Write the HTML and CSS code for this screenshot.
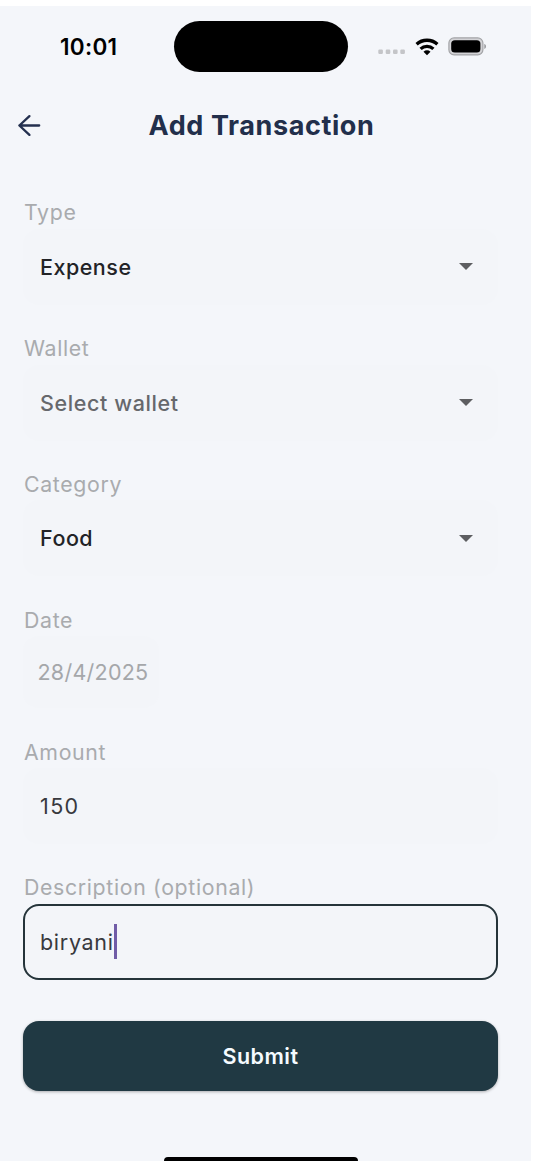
FILE: index.html
```html
<!DOCTYPE html>
<html lang="en">
<head>
<meta charset="utf-8">
<title>Add Transaction</title>
<link rel="stylesheet" href="styles.css">
</head>
<body>
<main class="phone">
  <header class="status-bar">
    <span class="clock">10:01</span>
    <span class="island"></span>
    <span class="indicators">
      <svg class="signal" width="28" height="6" viewBox="0 0 28 6" fill="#c4c5c8"><rect x=".3" y=".5" width="4.6" height="4.4" rx="1.2"/><rect x="7.7" y=".5" width="4.6" height="4.4" rx="1.2"/><rect x="15" y=".5" width="4.6" height="4.4" rx="1.2"/><rect x="22.3" y=".5" width="4.6" height="4.4" rx="1.2"/></svg>
      <svg class="wifi" width="24" height="18" viewBox="0 0 24 18" fill="none" stroke="#000" stroke-width="3.3"><path d="M1.6 6.3C7.4.9 16.6.9 22.4 6.3"/><path d="M5.6 10.9c3.6-3.4 9.2-3.4 12.8 0"/><path d="M8.5 13.7c2-1.8 5-1.8 7 0L12 17.2z" fill="#000" stroke="none"/></svg>
      <svg class="battery" width="39" height="19" viewBox="0 0 39 19"><rect x=".9" y=".9" width="34" height="17" rx="5.2" fill="#d3d3d6" stroke="#a3a4a7" stroke-width="1.2"/><rect x="3.2" y="3.2" width="29.2" height="12.4" rx="3.6"/><path d="M36.4 7.1c2 .6 2 4.2 0 4.8z" fill="#8e8f92"/></svg>
    </span>
  </header>
  <nav class="app-bar">
    <svg class="back" width="24" height="24" viewBox="0 0 24 24" fill="none" stroke="#24304f" stroke-width="2.3" stroke-linecap="round" stroke-linejoin="round"><path d="M21.2 11.5H1.4M11.4 2.1 1.4 11.5l10 9.4"/></svg>
    <h1 class="title">Add Transaction</h1>
  </nav>
  <form class="form">
    <div class="field">
      <label class="label">Type</label>
      <div class="box"><span class="value">Expense</span><svg class="caret" width="14" height="7" viewBox="0 0 14 7"><path d="M0 0h14L7 7z" fill="#5d5e61"/></svg></div>
    </div>
    <div class="field">
      <label class="label">Wallet</label>
      <div class="box"><span class="value hint">Select wallet</span><svg class="caret" width="14" height="7" viewBox="0 0 14 7"><path d="M0 0h14L7 7z" fill="#5d5e61"/></svg></div>
    </div>
    <div class="field">
      <label class="label">Category</label>
      <div class="box"><span class="value">Food</span><svg class="caret" width="14" height="7" viewBox="0 0 14 7"><path d="M0 0h14L7 7z" fill="#5d5e61"/></svg></div>
    </div>
    <div class="field date-field">
      <label class="label">Date</label>
      <div class="box date">28/4/2025</div>
    </div>
    <div class="field">
      <label class="label">Amount</label>
      <div class="box"><span class="input number">150</span></div>
    </div>
    <div class="field">
      <label class="label">Description (optional)</label>
      <div class="box focused"><span class="input typed">biryani</span><span class="cursor"></span></div>
    </div>
    <button class="submit" type="button">Submit</button>
  </form>
  <div class="home-indicator"></div>
</main>
</body>
</html>
```
FILE: styles.css
```css
* { box-sizing: border-box; }
body {
  margin: 0;
  padding-top: 6px;
  height: 1161px;
  overflow: hidden;
  background: #fff;
  font-family: Inter, Roboto, sans-serif;
}
.phone {
  width: 531px;
  height: 1155px;
  background: #f4f6fa;
  display: flex;
  flex-direction: column;
}
.status-bar {
  height: 81px;
  padding: 0 44px 0 60px;
  display: grid;
  grid-template-columns: 114px 174px 1fr;
  align-items: center;
}
.clock { font-size: 22.5px; font-weight: 600; line-height: 28px; letter-spacing: .3px; }
.island { height: 51px; border-radius: 26px; background: #000; }
.indicators { display: flex; justify-content: flex-end; align-items: center; }
.signal { margin: 11px 9px 0 0; }
.wifi { margin-right: 9px; }
.app-bar {
  height: 77px;
  padding: 0 18px;
  display: grid;
  grid-template-columns: 24px 1fr 24px;
  align-items: center;
}
.title {
  margin: 0;
  padding-right: 8px;
  text-align: center;
  font-size: 27px;
  line-height: 34px;
  font-weight: 700;
  letter-spacing: .6px;
  color: #222f4b;
}
.form {
  padding: 35.4px 33px 0 23px;
  display: flex;
  flex-direction: column;
}
.field { height: 135.8px; display: flex; flex-direction: column; }
.date-field { height: 131.8px; }
.label {
  height: 26px;
  margin: 0 0 3.5px 1px;
  font-size: 21.3px;
  line-height: 26px;
  letter-spacing: .65px;
  color: #a9abae;
}
.box {
  height: 76px;
  padding: 0 25px 0 17px;
  display: flex;
  align-items: center;
  border-radius: 16px;
  background: #f3f5f9;
  font-size: 21.5px;
  letter-spacing: .5px;
}
.value { font-weight: 500; color: #222327; }
.hint { letter-spacing: .6px; color: #66686c; }
.caret { margin-left: auto; }
.date { width: 136px; height: 72px; padding: 0 0 0 14.5px; letter-spacing: .25px; color: #a5a7aa; }
.input { color: #38393e; }
.number { letter-spacing: 1.4px; }
.typed { letter-spacing: .7px; }
.focused { border: 2px solid #25343a; padding-left: 15px; }
.cursor { width: 3px; height: 35px; background: #705ca7; }
.submit {
  height: 70px;
  margin-top: 10.6px;
  border: 0;
  border-radius: 16px;
  background: #203943;
  box-shadow: 0 1px 3px #0000004d;
  color: #f5fbff;
  font: 600 21.5px/28px Inter, Roboto, sans-serif;
  letter-spacing: .5px;
}
.home-indicator {
  width: 194px;
  height: 4px;
  margin: auto 0 0 164px;
  border-radius: 4px 4px 0 0;
  background: #000;
}
```
